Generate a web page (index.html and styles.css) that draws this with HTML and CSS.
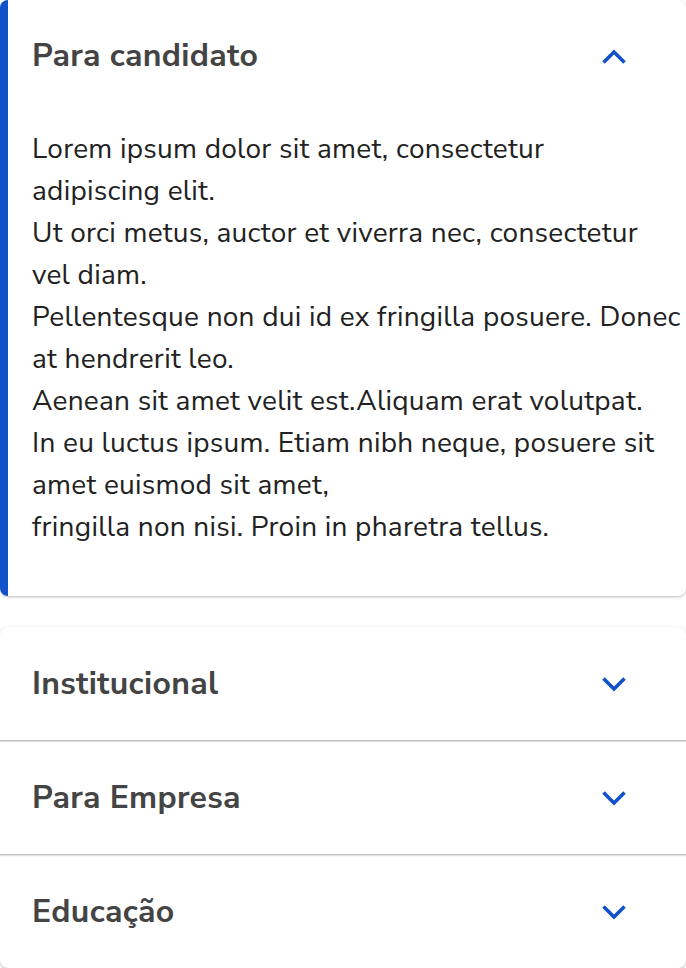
FILE: index.html
```html
<!DOCTYPE html>
<html lang="pt">
<head>
<meta charset="utf-8">
<link rel="stylesheet" href="styles.css">
</head>
<body>
<div class="accordion">
  <section class="card open">
    <div class="head">
      <h2 class="title">Para candidato</h2>
      <svg class="chev" width="24" height="24" viewBox="0 0 24 24"><path d="M1.5 19.5 L12 9 L22.5 19.5" /></svg>
    </div>
    <div class="body">
      <p>Lorem ipsum dolor sit amet, consectetur<br>adipiscing elit.<br>Ut orci metus, auctor et viverra nec, consectetur<br>vel diam.<br>Pellentesque non dui id ex fringilla posuere. Donec<br>at hendrerit leo.<br>Aenean sit amet velit est.Aliquam erat volutpat.<br>In eu luctus ipsum. Etiam nibh neque, posuere sit<br>amet euismod sit amet,<br>fringilla non nisi. Proin in pharetra tellus.</p>
    </div>
  </section>
  <section class="card group">
    <div class="row">
      <h2 class="title">Institucional</h2>
      <svg class="chev" width="24" height="24" viewBox="0 0 24 24"><path d="M1.5 6.5 L12 17 L22.5 6.5" /></svg>
    </div>
    <div class="row">
      <h2 class="title">Para Empresa</h2>
      <svg class="chev" width="24" height="24" viewBox="0 0 24 24"><path d="M1.5 6.5 L12 17 L22.5 6.5" /></svg>
    </div>
    <div class="row last">
      <h2 class="title">Educação</h2>
      <svg class="chev" width="24" height="24" viewBox="0 0 24 24"><path d="M1.5 6.5 L12 17 L22.5 6.5" /></svg>
    </div>
  </section>
</div>
</body>
</html>
```
FILE: styles.css
```css
html, body {
  margin: 0;
  padding: 0;
  background: #ffffff;
}
body {
  font-family: "Nunito Sans", "Lato", "Open Sans", sans-serif;
  width: 686px;
  height: 968px;
  overflow: hidden;
}
.accordion {
  display: flex;
  flex-direction: column;
  gap: 31px;
}
.card {
  background: #fff;
  border-radius: 8px;
  box-shadow: 0 1px 3px rgba(0,0,0,0.28);
}
.open {
  border-left: 8px solid #1151c9;
}
.head {
  height: 110px;
  display: flex;
  align-items: center;
  justify-content: space-between;
  padding: 0 60px 0 24px;
}
.title {
  margin: 0;
  font-size: 32px;
  letter-spacing: 0.3px;
  font-weight: 700;
  color: #444444;
}
.chev {
  display: block;
  fill: none;
  stroke: #1151c9;
  stroke-width: 3.6;
}
.body {
  padding: 18px 0 48px 24px;
}
.body p {
  margin: 0;
  font-size: 28px;
  letter-spacing: 0.25px;
  line-height: 42px;
  color: #222222;
  white-space: nowrap;
}
.row {
  height: 113px;
  display: flex;
  align-items: center;
  justify-content: space-between;
  padding: 0 60px 0 32px;
  border-bottom: 1px solid #c2c2c2;
  box-shadow: 0 1px 1px rgba(0,0,0,0.12);
}
.row.last {
  border-bottom: none;
  box-shadow: none;
}
```
